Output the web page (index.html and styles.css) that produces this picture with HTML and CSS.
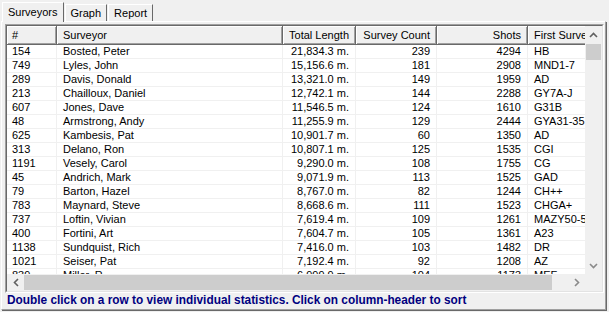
FILE: index.html
```html
<!DOCTYPE html>
<html lang="en">
<head>
    <meta charset="UTF-8">
    <title>Surveyors</title>
    <link rel="stylesheet" href="styles.css">
</head>
<body>
    <div class="tabs">
        <div class="tab active">Surveyors</div>
        <div class="tab">Graph</div>
        <div class="tab">Report</div>
    </div>

    <div class="panel">
        <div class="listview">
            <div class="listview-inner">
                <div class="viewport">
                    <table class="grid">
                        <colgroup>
                            <col style="width: 50px">
                            <col style="width: 226px">
                            <col style="width: 73px">
                            <col style="width: 81px">
                            <col style="width: 91px">
                            <col style="width: 90px">
                        </colgroup>
                        <thead>
                            <tr>
                                <th>#</th>
                                <th>Surveyor</th>
                                <th class="num">Total Length</th>
                                <th class="num">Survey Count</th>
                                <th class="num">Shots</th>
                                <th>First Survey</th>
                            </tr>
                        </thead>
                        <tbody>
                            <tr><td>154</td><td>Bosted, Peter</td><td class="num">21,834.3 m.</td><td class="num">239</td><td class="num">4294</td><td>HB</td></tr>
                            <tr><td>749</td><td>Lyles, John</td><td class="num">15,156.6 m.</td><td class="num">181</td><td class="num">2908</td><td>MND1-7</td></tr>
                            <tr><td>289</td><td>Davis, Donald</td><td class="num">13,321.0 m.</td><td class="num">149</td><td class="num">1959</td><td>AD</td></tr>
                            <tr><td>213</td><td>Chailloux, Daniel</td><td class="num">12,742.1 m.</td><td class="num">144</td><td class="num">2288</td><td>GY7A-J</td></tr>
                            <tr><td>607</td><td>Jones, Dave</td><td class="num">11,546.5 m.</td><td class="num">124</td><td class="num">1610</td><td>G31B</td></tr>
                            <tr><td>48</td><td>Armstrong, Andy</td><td class="num">11,255.9 m.</td><td class="num">129</td><td class="num">2444</td><td>GYA31-35</td></tr>
                            <tr><td>625</td><td>Kambesis, Pat</td><td class="num">10,901.7 m.</td><td class="num">60</td><td class="num">1350</td><td>AD</td></tr>
                            <tr><td>313</td><td>Delano, Ron</td><td class="num">10,807.1 m.</td><td class="num">125</td><td class="num">1535</td><td>CGI</td></tr>
                            <tr><td>1191</td><td>Vesely, Carol</td><td class="num">9,290.0 m.</td><td class="num">108</td><td class="num">1755</td><td>CG</td></tr>
                            <tr><td>45</td><td>Andrich, Mark</td><td class="num">9,071.9 m.</td><td class="num">113</td><td class="num">1525</td><td>GAD</td></tr>
                            <tr><td>79</td><td>Barton, Hazel</td><td class="num">8,767.0 m.</td><td class="num">82</td><td class="num">1244</td><td>CH++</td></tr>
                            <tr><td>783</td><td>Maynard, Steve</td><td class="num">8,668.6 m.</td><td class="num">111</td><td class="num">1523</td><td>CHGA+</td></tr>
                            <tr><td>737</td><td>Loftin, Vivian</td><td class="num">7,619.4 m.</td><td class="num">109</td><td class="num">1261</td><td>MAZY50-5</td></tr>
                            <tr><td>400</td><td>Fortini, Art</td><td class="num">7,604.7 m.</td><td class="num">105</td><td class="num">1361</td><td>A23</td></tr>
                            <tr><td>1138</td><td>Sundquist, Rich</td><td class="num">7,416.0 m.</td><td class="num">103</td><td class="num">1482</td><td>DR</td></tr>
                            <tr><td>1021</td><td>Seiser, Pat</td><td class="num">7,192.4 m.</td><td class="num">92</td><td class="num">1208</td><td>AZ</td></tr>
                            <tr><td>839</td><td>Miller, R.</td><td class="num">6,999.9 m.</td><td class="num">104</td><td class="num">1173</td><td>MEF</td></tr>
                        </tbody>
                    </table>
                </div>

                <!-- vertical scrollbar -->
                <div class="vscroll">
                    <div class="arrow">
                        <svg width="9" height="6" viewBox="0 0 9 6"><polyline points="1,5 4.5,1.5 8,5" class="chev"/></svg>
                    </div>
                    <div class="track-v"><div class="thumb-v"></div></div>
                    <div class="arrow">
                        <svg width="9" height="6" viewBox="0 0 9 6"><polyline points="1,1 4.5,4.5 8,1" class="chev light"/></svg>
                    </div>
                </div>

                <!-- horizontal scrollbar -->
                <div class="hscroll">
                    <div class="arrow">
                        <svg width="6" height="9" viewBox="0 0 6 9"><polyline points="5,1 1.5,4.5 5,8" class="chev"/></svg>
                    </div>
                    <div class="track-h"><div class="thumb-h"></div></div>
                    <div class="arrow">
                        <svg width="6" height="9" viewBox="0 0 6 9"><polyline points="1,1 4.5,4.5 1,8" class="chev light"/></svg>
                    </div>
                </div>

                <div class="corner"></div>
            </div>
        </div>

        <p class="hint">Double click on a row to view individual statistics. Click on column-header to sort</p>
    </div>
</body>
</html>
```

FILE: styles.css
```css
body {
    margin: 0;
    width: 609px;
    height: 312px;
    background-color: #f0f0f0;
    font-family: "Liberation Sans", Arial, sans-serif;
    font-size: 11px;
    color: #000;
    overflow: hidden;
}

/* tab strip */
.tabs {
    display: flex;
    align-items: flex-end;
    height: 21px;
    padding-left: 2px;
}
.tab {
    height: 16px;
    line-height: 16px;
    padding: 0 5px 0 5px;
    border: 1px solid;
    border-color: #fff #696969 transparent #fff;
    border-bottom: none;
    margin-right: 1px;
}
.tab.active {
    height: 19px;
    line-height: 18px;
    padding: 0 5px 0 5px;
    margin-bottom: -1px;
    position: relative;
    z-index: 1;
    background-color: #f0f0f0;
}

.panel {
    margin-left: 1px;
    width: 605px;
    height: 289px;
    box-sizing: border-box;
    border: 1px solid;
    border-color: #fff #a0a0a0 #a0a0a0 #fff;
    box-shadow: 1px 1px 0 #696969;
    padding: 2px 1px 0 3px;
}

/* list view */
.listview {
    width: 599px;
    height: 269px;
    box-sizing: border-box;
    border: 1px solid;
    border-color: #a0a0a0 #fff #fff #a0a0a0;
}
.listview-inner {
    height: 100%;
    box-sizing: border-box;
    border: 1px solid;
    border-color: #696969 #e3e3e3 #e3e3e3 #696969;
    background-color: #fff;
    display: grid;
    grid-template-columns: 1fr 17px;
    grid-template-rows: 1fr 17px;
}
.viewport {
    overflow: hidden;
}

.grid {
    width: 611px;
    table-layout: fixed;
    border-collapse: separate;
    border-spacing: 0;
}
.grid th {
    height: 19px;
    box-sizing: border-box;
    padding: 0 6px;
    font-weight: normal;
    text-align: left;
    background-color: #f0f0f0;
    border-right: 1px solid #696969;
    border-bottom: 1px solid #696969;
    box-shadow: inset 1px 1px 0 #fff, inset -1px -1px 0 #a0a0a0;
    white-space: nowrap;
    overflow: hidden;
}
.grid td {
    height: 14px;
    box-sizing: border-box;
    padding: 0 6px;
    line-height: 13px;
    border-right: 1px solid #f0f0f0;
    border-bottom: 1px solid #f0f0f0;
    white-space: nowrap;
    overflow: hidden;
}
.grid th:first-child,
.grid td:first-child {
    padding-left: 5px;
}
.grid .num {
    text-align: right;
}

/* scrollbars */
.vscroll {
    display: flex;
    flex-direction: column;
    background-color: #f0f0f0;
}
.hscroll {
    display: flex;
    background-color: #f0f0f0;
}
.arrow {
    width: 17px;
    height: 17px;
    flex: none;
    display: flex;
    align-items: center;
    justify-content: center;
}
.track-v {
    flex: 1;
}
.thumb-v {
    height: 16px;
    margin: 1px 1px 0 1px;
    background-color: #cdcdcd;
}
.track-h {
    flex: 1;
    display: flex;
}
.thumb-h {
    width: 528px;
    margin: 1px 0 1px 0;
    background-color: #cdcdcd;
}
.chev {
    fill: none;
    stroke: #606060;
    stroke-width: 1.6;
}
.chev.light {
    stroke: #8a8a8a;
}
.corner {
    background-color: #f0f0f0;
}

.hint {
    margin: 0;
    padding: 1px 0 0 2px;
    line-height: 13px;
    font-size: 11.85px;
    font-weight: bold;
    color: #000080;
    white-space: nowrap;
}
```
